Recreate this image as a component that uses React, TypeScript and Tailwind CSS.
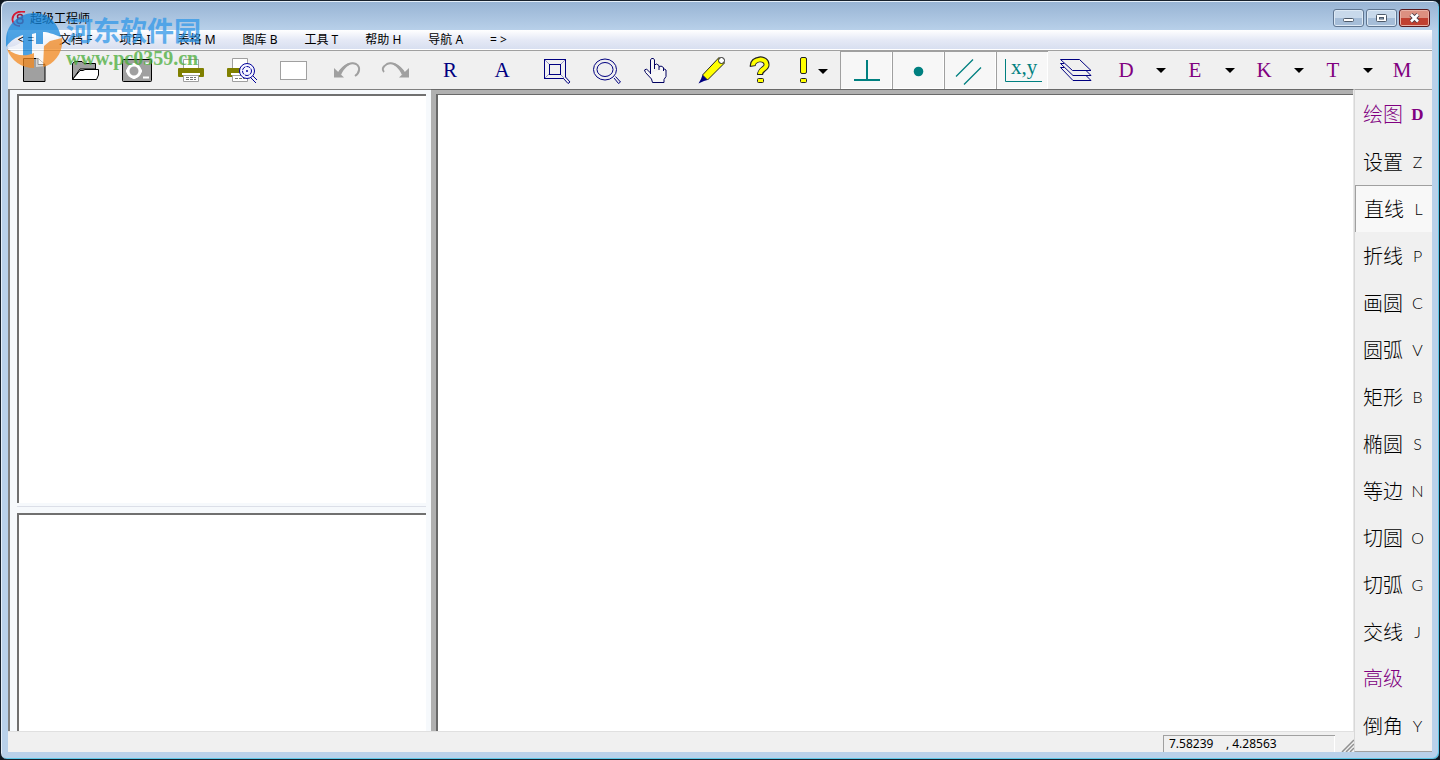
import type { ReactNode } from "react";

const menus = ["文档 F", "项目 I", "表格 M", "图库 B", "工具 T", "帮助 H", "导航 A"];

const commands = [
  { name: "绘图", key: "D", kind: "heading" },
  { name: "设置", key: "Z", kind: "item" },
  { name: "直线", key: "L", kind: "pressed" },
  { name: "折线", key: "P", kind: "item" },
  { name: "画圆", key: "C", kind: "item" },
  { name: "圆弧", key: "V", kind: "item" },
  { name: "矩形", key: "B", kind: "item" },
  { name: "椭圆", key: "S", kind: "item" },
  { name: "等边", key: "N", kind: "item" },
  { name: "切圆", key: "O", kind: "item" },
  { name: "切弧", key: "G", kind: "item" },
  { name: "交线", key: "J", kind: "item" },
  { name: "高级", key: "", kind: "heading" },
  { name: "倒角", key: "Y", kind: "item" },
];

function Glyph({ children }: { children: ReactNode }) {
  return (
    <svg viewBox="0 0 52 38" className="block h-[38px] w-[52px]" fill="none" aria-hidden="true">
      {children}
    </svg>
  );
}

function Tool({ label, pressed, children }: { label: string; pressed?: boolean; children: ReactNode }) {
  return (
    <button
      type="button"
      aria-label={label}
      aria-pressed={pressed}
      className={
        pressed
          ? "h-[38px] w-[52px] shrink-0 bg-[#f7f7f7] shadow-[inset_1px_1px_0_#a0a0a0,inset_-1px_-1px_0_#ffffff]"
          : "h-[38px] w-[52px] shrink-0"
      }
    >
      <Glyph>{children}</Glyph>
    </button>
  );
}

function LetterTool({ letter, menu }: { letter: string; menu?: boolean }) {
  return (
    <>
      <button
        type="button"
        className={
          letter === "R" || letter === "A"
            ? "h-[38px] w-[52px] shrink-0 pt-[2px] font-['Liberation_Serif',serif] text-[21px] text-[#000080]"
            : "h-[38px] w-[52px] shrink-0 pt-[2px] font-['Liberation_Serif',serif] text-[21px] text-[#800080]"
        }
      >
        {letter}
      </button>
      {menu && (
        <button type="button" aria-label={`${letter} 选项`} className="flex h-[38px] w-[17px] shrink-0 items-center justify-center">
          <svg viewBox="0 0 10 5" className="h-[5px] w-[10px]" aria-hidden="true">
            <path d="M0 0H10L5 5Z" fill="#000" />
          </svg>
        </button>
      )}
    </>
  );
}

function Toolbar() {
  return (
    <div role="toolbar" className="flex h-[38px] overflow-hidden bg-[#f0f0f0]">
      <Tool label="新建">
        <path d="M15.5 7.5H30L37 13.5V30.5H15.5Z" fill="#a0a0a0" stroke="#000" />
        <path d="M30 7.5V13.5H37" fill="#f0f0f0" stroke="#000" />
      </Tool>
      <Tool label="打开">
        <path d="M12.5 28.5V12.5L15 10.5H22L24 12.5H35.5V18H20L12.5 28.5" fill="#a0a0a0" stroke="#000" />
        <path d="M12.5 28.5L20 19.5H23L25 18.5H38.5V24L36.5 28.5Z" fill="#fff" stroke="#000" />
      </Tool>
      <Tool label="图像">
        <rect x="10.5" y="8.5" width="29" height="22" rx="1" fill="#a0a0a0" stroke="#000" />
        <circle cx="22" cy="20" r="6" stroke="#fff" strokeWidth="3" />
        <path d="M14 20h3M22 12v3M22 25v3M27 20h3" stroke="#fff" strokeWidth="3" />
        <path d="M33 12.5h4M31 26.5h6" stroke="#fff" strokeWidth="2" />
      </Tool>
      <Tool label="打印">
        <path d="M19.5 17V8.5H34.5V17" fill="#fff" stroke="#a0a0a0" />
        <rect x="14" y="17" width="26" height="9" rx="1" fill="#808000" />
        <path d="M18 22h18v2H18Z" fill="#fff" />
        <path d="M19.5 24.5H34.5V30.5H19.5Z" fill="#fff" stroke="#a0a0a0" />
        <path d="M22 26.5h10M22 28.5h10" stroke="#777" strokeDasharray="3 1" />
      </Tool>
      <Tool label="打印预览">
        <path d="M16.5 17V7.5H31.5V17" fill="#fff" stroke="#a0a0a0" />
        <rect x="11" y="17" width="24" height="9" rx="1" fill="#808000" />
        <path d="M15 22h14v2H15Z" fill="#fff" />
        <path d="M16.5 24.5H31.5V30.5H16.5Z" fill="#fff" stroke="#a0a0a0" />
        <path d="M19 27.5h10" stroke="#777" strokeDasharray="3 1" />
        <circle cx="31" cy="20" r="7.5" fill="#f4f4ff" stroke="#00009a" />
        <circle cx="31" cy="20" r="4.5" stroke="#00009a" strokeDasharray="4 1" />
        <circle cx="31" cy="20" r="1" fill="#00009a" />
        <path d="M35 27l5 5M37 25l4 4" stroke="#00009a" />
      </Tool>
      <Tool label="空白">
        <rect x="12.5" y="10.5" width="26" height="18" fill="#fff" stroke="#a0a0a0" />
      </Tool>
      <Tool label="撤销">
        <path d="M14 17L24 26.5H14Z" fill="#a0a0a0" />
        <path d="M18 23C24 13 32 11 36 13C41 16 39.5 22 35 25" stroke="#a0a0a0" strokeWidth="2" />
        <path d="M18 22C23 14 29 11 34 12C29 13 24 17 21 24Z" fill="#a0a0a0" />
      </Tool>
      <Tool label="重做">
        <path d="M37 17L27 26.5H37Z" fill="#a0a0a0" />
        <path d="M33 23C27 13 19 11 15 13C10 16 10 19 12 21" stroke="#a0a0a0" strokeWidth="2" />
        <path d="M33 22C28 14 22 11 17 12C22 13 27 17 30 24Z" fill="#a0a0a0" />
      </Tool>
      <LetterTool letter="R" />
      <LetterTool letter="A" />
      <Tool label="窗口缩放">
        <rect x="16.5" y="8.5" width="21" height="19" stroke="#000080" />
        <rect x="21.5" y="13.5" width="11" height="10" stroke="#000080" />
        <path d="M17 9l4 4M37 9l-4 4M17 27l4-4M33 24l3 3" stroke="#8080c0" strokeWidth=".8" />
        <path d="M35.5 27.5L40 32.5L42 31L37.5 26" fill="#f0f0f0" stroke="#000080" />
      </Tool>
      <Tool label="缩放">
        <path d="M34 27L38.5 32.5L40.5 31L35.5 25.5" fill="#f0f0f0" stroke="#000080" />
        <ellipse cx="25" cy="18.5" rx="11.5" ry="10.5" stroke="#000080" />
        <ellipse cx="25" cy="18.5" rx="8" ry="7" stroke="#000080" />
      </Tool>
      <Tool label="平移">
        <path
          d="M18.5 23V9L19.5 7.5H21.5L22.5 9V18M22.5 14L24.5 13L27 14.5V19M27 16L29 15L31.5 16.5V20M31.5 17.5L34 19V25.5L32 28.5V31.5H20.5L19.5 28L13.5 21.5L12.5 19L14.5 18L18.5 22"
          fill="#f7f7f7"
          stroke="#000060"
        />
      </Tool>
      <Tool label="画笔">
        <path d="M35 6.5L40.5 12L23.5 29L18.5 24Z" fill="#ff0" stroke="#222" />
        <circle cx="37.5" cy="9.5" r="3" fill="#fff" stroke="#222" />
        <path d="M18.5 24L23.5 29L20 30L14.5 32.5L17 28Z" fill="#000080" />
      </Tool>
      <Tool label="帮助">
        <path d="M16.8 15.5C15.5 7 31 5.5 30.5 14C30.5 18 24 18 24 24" stroke="#222" strokeWidth="6" strokeLinejoin="round" />
        <path d="M17 14.5C16.5 7.5 31 6 30.5 14C30.5 18 24 18 24 23" stroke="#ff0" strokeWidth="4" strokeLinejoin="round" />
        <rect x="21.5" y="27.5" width="6" height="4" rx="1" fill="#ff0" stroke="#222" />
      </Tool>
      <Tool label="提示">
        <rect x="12.5" y="6.5" width="6" height="16" rx="1.5" fill="#ff0" stroke="#222" />
        <rect x="12.5" y="27.5" width="6" height="4" rx="1" fill="#ff0" stroke="#222" />
        <path d="M30 18H40L35 23Z" fill="#000" />
      </Tool>
      <Tool label="正交" pressed>
        <path d="M27 9V29M14 29H40" stroke="#008080" strokeWidth="2" />
      </Tool>
      <Tool label="捕捉点" pressed>
        <circle cx="26.5" cy="20.5" r="4.8" fill="#008080" />
      </Tool>
      <Tool label="平行" pressed>
        <path d="M12 25.5L29 8.5M20 33.5L37 16.5" stroke="#008080" strokeWidth="1.3" />
      </Tool>
      <Tool label="坐标" pressed>
        <path d="M9.5 8V30.5H46" stroke="#008080" />
        <text x="15" y="23" fill="#008080" fontSize="21" fontFamily="Liberation Serif, serif">
          x,y
        </text>
      </Tool>
      <Tool label="图层">
        <g fill="#f0f0f0" stroke="#000080">
          <path d="M12.5 16.5L25 29.5H43L38.5 25" />
          <path d="M12.5 16.5H16M12.5 12.5L25 24.5H43L38.5 20" />
          <path d="M12.5 8.5H31.5L43 19.5H24.5Z" />
          <path d="M12.5 12.5H16" />
        </g>
      </Tool>
      <LetterTool letter="D" menu />
      <LetterTool letter="E" menu />
      <LetterTool letter="K" menu />
      <LetterTool letter="T" menu />
      <LetterTool letter="M" />
    </div>
  );
}

function TitleBar() {
  return (
    <header className="flex h-[29px] shrink-0 items-start justify-between pr-[2px] pl-[3px]">
      <div className="flex items-center pt-[9px]">
        <svg viewBox="0 0 16 16" className="h-4 w-4" fill="none" aria-hidden="true">
          <path d="M14 1C6-1 1 4 1.5 9C2 13 5 15 9 15" stroke="#d81830" strokeWidth="1.8" />
          <ellipse cx="9" cy="5.5" rx="2.5" ry="2" stroke="#a01838" strokeWidth="1.5" />
          <ellipse cx="9" cy="10" rx="3" ry="2.5" stroke="#a01838" strokeWidth="1.5" />
        </svg>
        <h1 className="pt-px pl-[3px] text-[12px] leading-4 text-black">超级工程师</h1>
      </div>
      <div className="flex gap-[2px] pt-2">
        <button type="button" aria-label="最小化" className="h-[18px] w-[31px] rounded-[3px] border border-[#5f7590] bg-linear-to-b from-[#c8d9eb] from-50% to-[#a5bdd8] to-50% shadow-[inset_0_0_0_1px_#dde9f5]">
          <svg viewBox="0 0 29 16" className="block h-4 w-[29px]" aria-hidden="true">
            <rect x="9.5" y="8.5" width="10" height="3" rx="1" fill="#fff" stroke="#4d5a6a" />
          </svg>
        </button>
        <button type="button" aria-label="最大化" className="h-[18px] w-[31px] rounded-[3px] border border-[#5f7590] bg-linear-to-b from-[#c8d9eb] from-50% to-[#a5bdd8] to-50% shadow-[inset_0_0_0_1px_#dde9f5]">
          <svg viewBox="0 0 29 16" className="block h-4 w-[29px]" aria-hidden="true">
            <rect x="9.5" y="4.5" width="10" height="7" rx="1" fill="#fff" stroke="#4d5a6a" />
            <rect x="12.5" y="7.5" width="4" height="1.500" fill="#a5bdd8" stroke="#4d5a6a" />
          </svg>
        </button>
        <button type="button" aria-label="关闭" className="h-[18px] w-[31px] rounded-[3px] border border-[#5a1a1e] bg-linear-to-b from-[#dc9080] from-50% to-[#c04030] to-50% shadow-[inset_0_0_0_1px_#e8b0a4]">
          <svg viewBox="0 0 29 16" className="block h-4 w-[29px]" aria-hidden="true">
            <path d="M11 4.5L18 11.5M18 4.5L11 11.5" stroke="#4a3a44" strokeWidth="4.5" />
            <path d="M11 4.5L18 11.5M18 4.5L11 11.5" stroke="#fff" strokeWidth="2.6" />
          </svg>
        </button>
      </div>
    </header>
  );
}

function MenuBar() {
  return (
    <nav className="flex h-[19px] shrink-0 items-center gap-px bg-linear-to-b from-white via-[#e6eaf6] via-50% to-[#d8dff0] text-[12px] leading-[18px] text-black">
      <button type="button" className="w-[37px] pr-px">&lt; =</button>
      {menus.map((menu) => (
        <button type="button" key={menu} className="px-[13px] whitespace-pre">
          {menu}
        </button>
      ))}
      <button type="button" className="px-[13px]">= &gt;</button>
    </nav>
  );
}

function CommandBar() {
  return (
    <aside className="flex w-[78px] shrink-0 flex-col border-t border-b border-l border-t-[#a0a0a0] border-b-[#a0a0a0] border-l-[#d8d8d8] bg-[#f0f0f0] pt-px font-['Lato','Noto_Sans_CJK_SC',sans-serif]">
      {commands.map(({ name, key, kind }) => (
        <button
          type="button"
          key={name}
          aria-pressed={kind === "pressed"}
          className={
            kind === "pressed"
              ? "grid h-[47px] shrink-0 grid-cols-[44px_1fr] items-center bg-[#f8f8f8] pt-px pr-[3px] pl-[9px] text-left text-black shadow-[inset_1px_1px_0_#a0a0a0]"
              : kind === "heading"
                ? "grid h-[47px] shrink-0 grid-cols-[44px_1fr] items-center pr-[4px] pl-[8px] text-left font-['Liberation_Serif','Noto_Sans_CJK_SC',serif] text-[#800080]"
                : "grid h-[47px] shrink-0 grid-cols-[44px_1fr] items-center pr-[4px] pl-[8px] text-left text-black"
          }
        >
          <span className="text-[20px] leading-6 font-light">{name}</span>
          <span className={kind === "heading" ? "text-center text-[17px] leading-6 font-bold" : "text-center text-[16px] leading-6 font-light"}>
            {key}
          </span>
        </button>
      ))}
    </aside>
  );
}

function Watermark() {
  return (
    <div className="pointer-events-none absolute top-[10px] left-[4px] flex items-start opacity-75" aria-hidden="true">
      <svg viewBox="0 0 58 58" className="h-[58px] w-[58px]" fill="none">
        <path d="M3 36C12 36 20 30 26 20H38L53 22L54 34L41 40V55L31 56V44C21 48 9 47 3 36Z" fill="#fff" fillOpacity=".75" />
        <path d="M1 28C2 13 14 2 30 2C42 2 53 11 56 26C48 23 43 21 38 21V33H31V22L27 23V45H18V24C11 26 5 30 1 36Z" fill="#1687dc" />
        <path d="M2 38C11 45 20 46 29 42V57C17 57 6 50 2 38Z" fill="#f58a1f" />
        <path d="M39 35L45 30L57 27C59 40 50 53 38 56Z" fill="#f58a1f" />
      </svg>
      <div className="flex flex-col pl-[3px]">
        <span className="font-['Noto_Sans_CJK_SC',sans-serif] text-[27px] leading-[37px] font-bold text-[#3198e8]">河东软件园</span>
        <span className="font-['Liberation_Serif',serif] text-[20px] leading-5 font-bold text-[#48ac38]">www.pc0359.cn</span>
      </div>
    </div>
  );
}

export default function App() {
  return (
    <div className="bg-[#101820] font-['Noto_Sans','Noto_Sans_CJK_SC',sans-serif]">
      <div className="relative flex min-h-screen flex-col rounded-[7px] border border-[#17202b] bg-linear-to-b from-[#97b3d3] to-[#b9d1ea] to-[30px] px-[7px] pb-[7px] shadow-[inset_1px_1px_0_#e4eef8,inset_-1px_-1px_0_#5cc8e8]">
        <TitleBar />
        <MenuBar />
        <div className="h-[2px] shrink-0 border-b border-[#a0a0a0] bg-white" />
        <Toolbar />
        <div className="flex grow">
          <div className="flex min-w-0 grow flex-col">
            <main className="flex grow border-b border-[#e0e0e0]">
              <section
                aria-label="图纸列表"
                className="flex w-[423px] shrink-0 flex-col border-t border-l-2 border-[#808080] bg-[#f6f9fc] pt-[4px] pr-[5px] pl-[7px]"
              >
                <div className="grid grow grid-rows-[412fr_225fr]">
                  <div className="mb-[3px] border-t-2 border-l-2 border-[#707070] bg-white" />
                  <div className="flex flex-col border-t border-[#dcdfe8] pt-[6px]">
                    <div className="grow border-t-2 border-l-2 border-[#707070] bg-white" />
                  </div>
                </div>
              </section>
              <section
                aria-label="绘图区"
                className="flex grow border-t border-r border-t-[#696969] border-r-[#e8e8e8] bg-[#b0b0b0] pt-[4px] pl-[5px]"
              >
                <div className="grow border-t border-l-2 border-[#696969] bg-white" />
              </section>
            </main>
            <footer className="flex h-[20px] shrink-0 items-end justify-end bg-[#f0f0f0]">
              <output className="mr-[6px] h-[17px] w-[172px] border-t border-l border-[#a0a0a0] pl-[5px] text-[12px] leading-[16px] whitespace-pre text-black shadow-[inset_-1px_0_0_#fff]">
                {"7.58239    , 4.28563"}
              </output>
              <svg viewBox="0 0 13 13" className="h-[13px] w-[13px]" aria-hidden="true">
                <path d="M1 13L13 1M5 13L13 5M9 13L13 9" stroke="#909090" strokeWidth="1.5" />
              </svg>
            </footer>
          </div>
          <CommandBar />
        </div>
        <Watermark />
      </div>
    </div>
  );
}
